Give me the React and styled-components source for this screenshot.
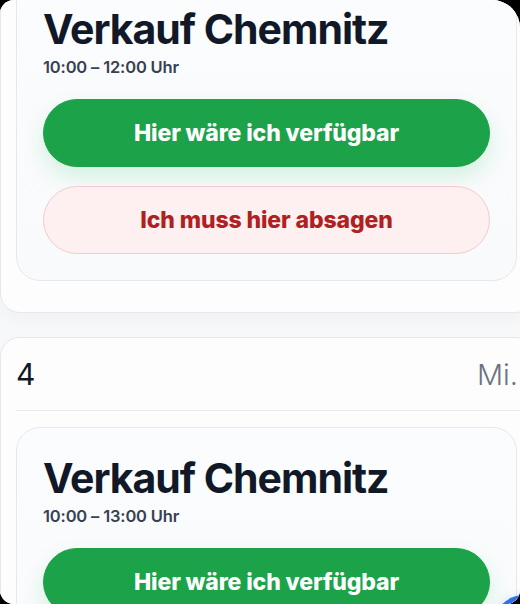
import styled, { createGlobalStyle } from "styled-components";

const Global = createGlobalStyle`
    html, body {
        margin: 0;
        padding: 0;
        background: #000;
    }
    * {
        box-sizing: border-box;
    }
`

const Screen = styled.div`
    position: relative;
    width: 520px;
    height: 604px;
    overflow: hidden;
    background: #f7f8fa;
    border-radius: 14px 28px 14px 14px;
    font-family: Inter, "Noto Sans", sans-serif;
`

const Scroller = styled.div`
    display: flex;
    flex-direction: column;
    gap: 24px;
    margin-top: -112px;
`

const DayCard = styled.section`
    width: 535px;
    background: #fdfdfe;
    border: 1px solid #e6e8ee;
    border-radius: 20px;
    padding: 0 17px 31px 15px;
    box-shadow: 0 6px 18px rgba(15, 23, 42, 0.03);
`

const DayHeader = styled.div`
    display: flex;
    justify-content: space-between;
    align-items: center;
    height: 73px;
    border-bottom: 1px solid #e8eaef;
    margin-right: -17px;
    padding-right: 16px;
    margin-bottom: 16px;
`

const DayNum = styled.span`
    font-size: 30px;
    font-weight: 400;
    color: #111827;
`

const DayName = styled.span`
    font-size: 29px;
    font-weight: 300;
    color: #6b7280;
`

const ShiftCard = styled.div`
    display: flex;
    flex-direction: column;
    background: linear-gradient(180deg, #fbfcfd 0%, #f9fafc 100%);
    border: 1px solid #e6e8ee;
    border-radius: 24px;
    padding: 26px 26px 26px 26px;
`

const Title = styled.h2`
    margin: 0;
    font-size: 41px;
    line-height: 48px;
    font-weight: 700;
    letter-spacing: -0.025em;
    color: #111827;
`

const Time = styled.div`
    margin-top: 4px;
    font-size: 16.5px;
    line-height: 20px;
    font-weight: 600;
    color: #374151;
    letter-spacing: -0.01em;
`

const Button = styled.button`
    display: flex;
    align-items: center;
    justify-content: center;
    height: 68px;
    width: 100%;
    border-radius: 34px;
    font-family: inherit;
    font-size: 23px;
    font-weight: 800;
    letter-spacing: -0.005em;
    cursor: pointer;
    border: 1px solid ${p => p.$danger ? "#f7c8cc" : "#1ca34a"};
    background: ${p => p.$danger ? "#fef0f1" : "#1ca34a"};
    color: ${p => p.$danger ? "#b0201f" : "#ffffff"};
    box-shadow: ${p => p.$danger ? "none" : "0 10px 22px rgba(34, 197, 94, 0.18)"};
    margin-top: ${p => p.$danger ? "19px" : "22px"};
`

const Fab = styled.div`
    position: absolute;
    left: 494px;
    top: 595px;
    width: 60px;
    height: 60px;
    border-radius: 50%;
    background: #2f6fe8;
    box-shadow: 0 4px 12px rgba(37, 99, 235, 0.35);
`

const days = [
    { num: 3, name: "Di.", time: "10:00 – 12:00 Uhr", cancel: true },
    { num: 4, name: "Mi.", time: "10:00 – 13:00 Uhr", cancel: true },
]

export default function App(){
    return(
        <Screen>
            <Global />
            <Scroller>
                {days.map(d => (
                    <DayCard key={d.num}>
                        <DayHeader>
                            <DayNum>{d.num}</DayNum>
                            <DayName>{d.name}</DayName>
                        </DayHeader>
                        <ShiftCard>
                            <Title>Verkauf Chemnitz</Title>
                            <Time>{d.time}</Time>
                            <Button>Hier wäre ich verfügbar</Button>
                            {d.cancel && <Button $danger>Ich muss hier absagen</Button>}
                        </ShiftCard>
                    </DayCard>
                ))}
            </Scroller>
            <Fab />
        </Screen>
    )
}
